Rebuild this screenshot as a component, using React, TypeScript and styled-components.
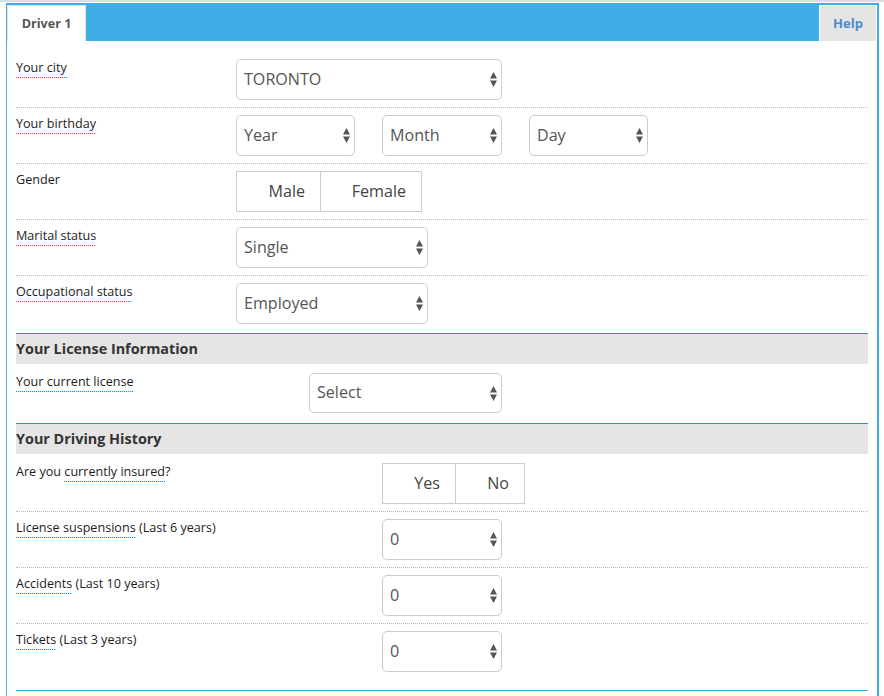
import React, { ReactElement } from "react"
import styled, { createGlobalStyle } from "styled-components"

const GlobalStyle = createGlobalStyle`
  html, body {
    margin: 0;
    padding: 0;
    background: #fff;
    font-family: "Open Sans", "Liberation Sans", sans-serif;
  }
`

const Page = styled.div`
  width: 884px;
  height: 696px;
  overflow: hidden;
  border-top: 2px solid #dcdcdc;
  padding: 1px 5px 0 6px;
  box-sizing: border-box;
`

const Panel = styled.div`
  width: 873px;
  height: 720px;
  border: solid #3fade6;
  border-width: 0 2px 0 1px;
  box-sizing: border-box;
`

const TabBar = styled.div`
  height: 38px;
  background: #3fade6;
  display: flex;
  justify-content: space-between;
  align-items: flex-end;
  box-sizing: border-box;
`

const Tab = styled.div`
  width: 79px;
  height: 36px;
  background: #fff;
  border: solid #e4e4e4;
  border-width: 1px 1px 0 1px;
  box-sizing: border-box;
  display: flex;
  align-items: center;
  justify-content: center;
  font-size: 12.6px;
  font-weight: 700;
  color: #555;
`

const HelpTab = styled.div`
  width: 58px;
  height: 36px;
  background: #e4e4e4;
  border: solid #fff;
  border-width: 1px 1px 0 1px;
  box-sizing: border-box;
  display: flex;
  align-items: center;
  justify-content: center;
  padding-bottom: 2px;
  font-size: 13px;
  font-weight: 700;
  color: #4a8ccb;
`

const Form = styled.div`
  margin: 0 9px;
  padding-top: 11px;
  height: 650px;
  box-sizing: border-box;
  border-bottom: 1px solid #3fade6;
`

const Row = styled.div<{ $top?: number; $bottom?: number; $plain?: boolean }>`
  display: grid;
  grid-template-columns: 220px 1fr;
  padding: ${(p) => p.$top ?? 7}px 0 ${(p) => p.$bottom ?? 7}px;
  border-bottom: ${(p) => (p.$plain ? "none" : "1px dotted #bbb")};
`

const Label = styled.div`
  font-size: 12.6px;
  line-height: 17px;
  color: #1c1c1c;
`

const Term = styled.span`
  display: inline-block;
  line-height: 16px;
  padding-bottom: 2px;
  background: repeating-linear-gradient(90deg, #009ff5 0 1px, #bfe6fb 1px 2px) left bottom / 100% 1px no-repeat;
`

const Controls = styled.div<{ $indent?: number }>`
  display: flex;
  gap: 27px;
  padding-left: ${(p) => p.$indent ?? 0}px;
`

const SelectBox = styled.div<{ $width: number; $short?: boolean }>`
  position: relative;
  width: ${(p) => p.$width}px;
  height: ${(p) => (p.$short ? 40 : 41)}px;
`

const NativeSelect = styled.select`
  appearance: none;
  width: 100%;
  height: 100%;
  margin: 0;
  padding: 0 7px 2px;
  background: #fff;
  border: 1px solid #ccc;
  border-radius: 5px;
  box-sizing: border-box;
  font-family: inherit;
  font-size: 16.1px;
  color: #555;
`

const Arrows = styled.svg`
  position: absolute;
  right: 5px;
  top: 50%;
  margin-top: -7.5px;
  width: 7px;
  height: 15px;
  pointer-events: none;
`

const Toggle = styled.div`
  display: flex;
  height: 41px;
  border: 1px solid #ccc;
  box-sizing: border-box;
`

const ToggleOption = styled.div<{ $width: number }>`
  width: ${(p) => p.$width}px;
  box-sizing: border-box;
  display: flex;
  align-items: center;
  justify-content: flex-end;
  padding: 0 15px 2px 0;
  font-size: 16.1px;
  color: #444;
  & + & {
    border-left: 1px solid #ccc;
  }
`

const SectionHeader = styled.div`
  height: 31px;
  border-top: 1px solid #3a8cb0;
  background: #e5e5e5;
  box-sizing: border-box;
  display: flex;
  align-items: center;
  padding-bottom: 2px;
  font-size: 14.4px;
  font-weight: 700;
  color: #333;
`

function Select({ value, width, short }: { value: string; width: number; short?: boolean }): ReactElement {
  return (
    <SelectBox $width={width} $short={short}>
      <NativeSelect defaultValue={value}>
        <option>{value}</option>
      </NativeSelect>
      <Arrows viewBox="0 0 7 15">
        <path d="M3.5 0 L7 6.5 L0 6.5 Z M0 8.5 L7 8.5 L3.5 15 Z" fill="#555" />
      </Arrows>
    </SelectBox>
  )
}

export default function App(): ReactElement {
  return (
    <Page>
      <GlobalStyle />
      <Panel>
        <TabBar>
          <Tab>Driver 1</Tab>
          <HelpTab>Help</HelpTab>
        </TabBar>
        <Form>
          <Row>
            <Label><Term>Your city</Term></Label>
            <Controls><Select value="TORONTO" width={266} /></Controls>
          </Row>
          <Row>
            <Label><Term>Your birthday</Term></Label>
            <Controls>
              <Select value="Year" width={119} />
              <Select value="Month" width={120} />
              <Select value="Day" width={119} />
            </Controls>
          </Row>
          <Row>
            <Label>Gender</Label>
            <Controls>
              <Toggle>
                <ToggleOption $width={83}>Male</ToggleOption>
                <ToggleOption $width={101}>Female</ToggleOption>
              </Toggle>
            </Controls>
          </Row>
          <Row>
            <Label><Term>Marital status</Term></Label>
            <Controls><Select value="Single" width={192} /></Controls>
          </Row>
          <Row $bottom={9} $plain>
            <Label><Term>Occupational status</Term></Label>
            <Controls><Select value="Employed" width={192} /></Controls>
          </Row>
          <SectionHeader>Your License Information</SectionHeader>
          <Row $top={9} $bottom={10} $plain>
            <Label><Term>Your current license</Term></Label>
            <Controls $indent={73}><Select value="Select" width={193} short /></Controls>
          </Row>
          <SectionHeader>Your Driving History</SectionHeader>
          <Row $top={9}>
            <Label>Are you <Term>currently insured</Term>?</Label>
            <Controls $indent={146}>
              <Toggle>
                <ToggleOption $width={72}>Yes</ToggleOption>
                <ToggleOption $width={69}>No</ToggleOption>
              </Toggle>
            </Controls>
          </Row>
          <Row>
            <Label><Term>License suspensions</Term> (Last 6 years)</Label>
            <Controls $indent={146}><Select value="0" width={120} /></Controls>
          </Row>
          <Row>
            <Label><Term>Accidents</Term> (Last 10 years)</Label>
            <Controls $indent={146}><Select value="0" width={120} /></Controls>
          </Row>
          <Row $plain>
            <Label><Term>Tickets</Term> (Last 3 years)</Label>
            <Controls $indent={146}><Select value="0" width={120} /></Controls>
          </Row>
        </Form>
      </Panel>
    </Page>
  )
}
